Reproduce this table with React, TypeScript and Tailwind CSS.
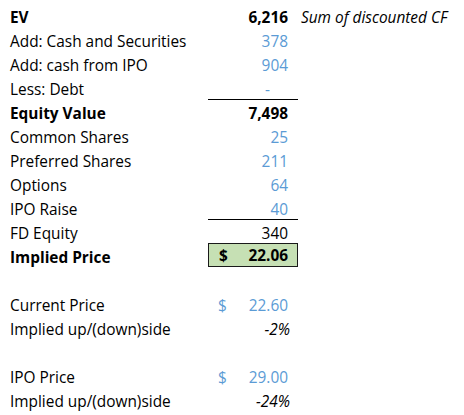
import { FC, ReactNode } from 'react'
import clsx from 'clsx'

interface RowProps {
  label?: string
  value?: ReactNode
  bold?: boolean
  blue?: boolean
  italic?: boolean
  underline?: boolean
  note?: string
  valueClass?: string
}

const Row: FC<RowProps> = ({ label, value, bold, blue, italic, underline, note, valueClass }) => {
  return (
    <div className="flex h-[24px] leading-[24px]">
      <div className={clsx('w-[208px] pl-[10px] pt-[2px] text-black', bold && 'font-bold')}>{label}</div>
      <div
        className={clsx(
          'w-[90px] h-[24px] pt-[2px] text-right',
          bold && 'font-bold',
          italic && 'italic',
          blue ? 'text-[#5b9bd5]' : 'text-black',
          underline && 'border-b border-black',
          valueClass ?? 'pr-[10px]'
        )}
      >
        {value}
      </div>
      {note && <div className="pl-[3px] pt-[2px] italic text-black whitespace-nowrap">{note}</div>}
    </div>
  )
}

const Dollar: FC<{ amount: string }> = ({ amount }) => (
  <div className="flex justify-between pl-[10px]">
    <span>$</span>
    <span>{amount}</span>
  </div>
)

export default function App() {
  return (
    <div
      className="w-[464px] h-[415px] overflow-hidden bg-white pt-[4px] text-[15.4px]"
      style={{ fontFamily: '"Open Sans", sans-serif' }}
    >
      <Row label="EV" value="6,216" bold note="Sum of discounted CF" />
      <Row label="Add: Cash and Securities" value="378" blue />
      <Row label="Add: cash from IPO" value="904" blue />
      <Row label="Less: Debt" value="-" blue underline valueClass="pr-[28px]" />
      <Row label="Equity Value" value="7,498" bold />
      <Row label="Common Shares" value="25" blue />
      <Row label="Preferred Shares" value="211" blue />
      <Row label="Options" value="64" blue />
      <Row label="IPO Raise" value="40" blue underline />
      <Row label="FD Equity" value="340" />
      <div className="flex h-[24px] leading-[24px]">
        <div className="w-[208px] pl-[10px] pt-[2px] font-bold text-black">Implied Price</div>
        <div className="w-[90px] -mt-[1px] h-[24px] border border-[#1a1a1a] bg-[#c6e0b4] pr-[9px] pt-[1px] leading-[22px] font-bold text-black">
          <Dollar amount="22.06" />
        </div>
      </div>
      <Row />
      <Row label="Current Price" value={<Dollar amount="22.60" />} blue />
      <Row label="Implied up/(down)side" value="-2%" italic valueClass="pr-[8px]" />
      <Row />
      <Row label="IPO Price" value={<Dollar amount="29.00" />} blue />
      <Row label="Implied up/(down)side" value="-24%" italic valueClass="pr-[8px]" />
    </div>
  )
}
